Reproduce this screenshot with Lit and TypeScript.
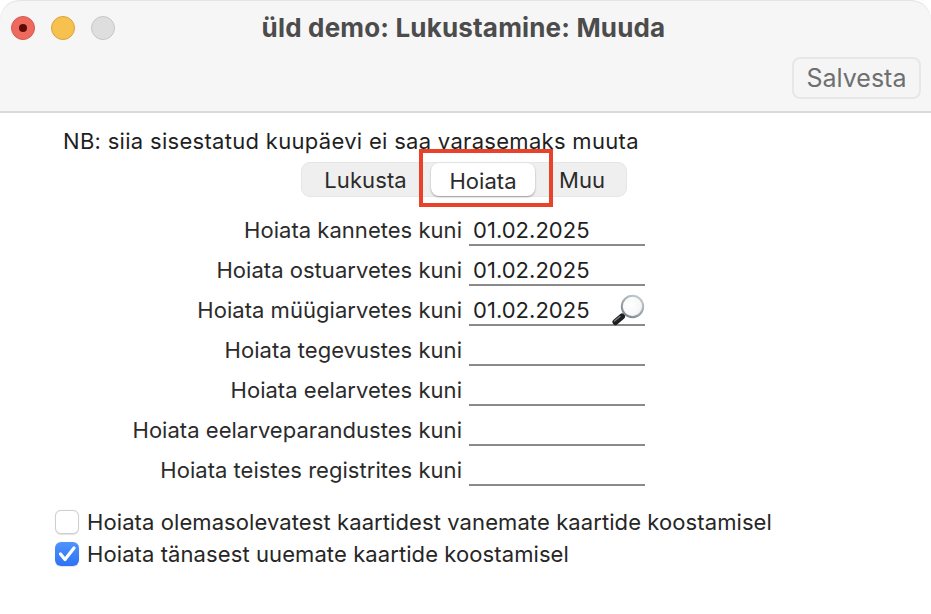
import { LitElement, html, css } from "lit";
import { customElement } from "lit/decorators.js";

const ROWS = [
    { label: "Hoiata kannetes kuni", value: "01.02.2025" },
    { label: "Hoiata ostuarvetes kuni", value: "01.02.2025" },
    { label: "Hoiata müügiarvetes kuni", value: "01.02.2025", lookup: true },
    { label: "Hoiata tegevustes kuni", value: "" },
    { label: "Hoiata eelarvetes kuni", value: "" },
    { label: "Hoiata eelarveparandustes kuni", value: "" },
    { label: "Hoiata teistes registrites kuni", value: "" },
];

@customElement("app-root")
export class AppRoot extends LitElement {
    static styles = css`
        :host {
            display: block;
            position: relative;
            width: 931px;
            height: 614px;
            overflow: hidden;
            background: #fff;
            font-family: Inter, "Liberation Sans", sans-serif;
            font-size: 22px;
            letter-spacing: 0.03px;
            color: #262626;
        }
        .toolbar {
            box-sizing: border-box;
            height: 113px;
            display: flex;
            flex-direction: column;
            padding: 0 10px 0 11px;
            background: #f6f6f6;
            border-bottom: 2px solid #dadada;
            border-radius: 20px 20px 0 0;
            box-shadow: inset 0 1px 0 #e4e4e4;
        }
        .titlebar {
            height: 56px;
            flex: none;
            display: flex;
            align-items: center;
            position: relative;
        }
        .lights {
            display: flex;
            gap: 16px;
        }
        .light {
            box-sizing: border-box;
            width: 24px;
            height: 24px;
            border-radius: 50%;
            display: flex;
            align-items: center;
            justify-content: center;
        }
        .close { background: #ee6a5f; border: 1px solid #d35a50; }
        .close span {
            width: 8px;
            height: 8px;
            border-radius: 50%;
            background: #5e0b06;
        }
        .min { background: #f6c14f; border: 1px solid #dca13c; }
        .max { background: #dedede; border: 1px solid #c6c6c6; }
        .title {
            position: absolute;
            left: -5px;
            right: 0;
            top: 13px;
            text-align: center;
            font-size: 26px;
            line-height: 30px;
            font-weight: 700;
            letter-spacing: 0.17px;
            color: #4c4c4c;
        }
        .actions {
            display: flex;
            justify-content: flex-end;
            margin-top: 1px;
        }
        .save {
            box-sizing: border-box;
            width: 129px;
            height: 42px;
            border: 2px solid #e7e7e7;
            border-radius: 8px;
            background: #f5f5f5;
            color: #6f6f6f;
            font: inherit;
            font-size: 25px;
            padding: 0;
        }
        .note {
            margin: 15px 0 0 63px;
            line-height: 26px;
            letter-spacing: 0.3px;
            color: #1f1f1f;
        }
        .tabs-wrap {
            display: flex;
            padding-left: 301px;
            margin-top: 8px;
        }
        .tabs {
            box-sizing: border-box;
            width: 326px;
            height: 35px;
            display: flex;
            align-items: center;
            background: #efefef;
            border: 1px solid #e6e6e6;
            border-radius: 9px;
        }
        .tab {
            flex: none;
            text-align: center;
            line-height: 36px;
            color: #2b2b2b;
        }
        .tab.first { width: 127px; padding-right: 2px; letter-spacing: 0.1px; }
        .tab.active {
            width: 104px;
            height: 33px;
            background: #fff;
            border-radius: 8px;
            box-shadow: 0 1px 2px rgba(0, 0, 0, 0.35);
        }
        .tab.last { width: 88px; padding-left: 3px; }
        .marker {
            position: absolute;
            left: 419px;
            top: 149px;
            box-sizing: border-box;
            width: 134px;
            height: 58px;
            border: 4px solid #e8432a;
        }
        .form {
            margin-top: 15px;
            display: grid;
            grid-template-columns: 462px 176px;
            column-gap: 7px;
            grid-auto-rows: 40px;
        }
        .label {
            text-align: right;
            line-height: 36px;
            color: #2b2b2b;
        }
        .field {
            box-sizing: border-box;
            height: 30px;
            margin-top: 4px;
            padding-left: 4px;
            line-height: 28px;
            border-bottom: 2px solid #8a8a8a;
            color: #1f1f1f;
            position: relative;
        }
        .lookup {
            position: absolute;
            right: 0;
            top: -4px;
            width: 36px;
            height: 36px;
        }
        .checks {
            margin: 18px 0 0 55px;
            display: flex;
            flex-direction: column;
            gap: 8px;
            letter-spacing: 0.09px;
        }
        .check {
            display: flex;
            align-items: center;
            gap: 8px;
            height: 24px;
            color: #262626;
        }
        .box {
            box-sizing: border-box;
            width: 24px;
            height: 24px;
            border-radius: 6px;
            border: 1px solid #cfcfcf;
            background: #fff;
            box-shadow: 0 0.5px 1px rgba(0, 0, 0, 0.12);
        }
        .box.on {
            border: none;
            background: linear-gradient(#4f94fb, #2f72f6);
        }
        .box svg {
            display: block;
            width: 24px;
            height: 24px;
        }
    `;

    renderLookup() {
        return html`
            <svg class="lookup" viewBox="0 0 36 36">
                <defs>
                    <radialGradient id="lens" cx="42%" cy="42%" r="65%">
                        <stop offset="0%" stop-color="#ffffff"></stop>
                        <stop offset="72%" stop-color="#f6f7f8"></stop>
                        <stop offset="100%" stop-color="#cfd5da"></stop>
                    </radialGradient>
                    <linearGradient id="ring" x1="0.8" y1="0" x2="0.2" y2="1">
                        <stop offset="0%" stop-color="#c3ccd3"></stop>
                        <stop offset="100%" stop-color="#7d858b"></stop>
                    </linearGradient>
                </defs>
                <path d="M14 24 L17 21" stroke="#8a8d90" stroke-width="3"></path>
                <path d="M6.5 30 L13 24.5" stroke="#1d1d1f" stroke-width="6" stroke-linecap="round"></path>
                <path d="M5.5 29 L11 24.5" stroke="#7d8082" stroke-width="1.3" stroke-linecap="round"></path>
                <circle cx="23.5" cy="14.5" r="10.7" fill="url(#lens)" stroke="url(#ring)" stroke-width="2"></circle>
            </svg>
        `;
    }

    render() {
        return html`
            <div class="toolbar">
                <div class="titlebar">
                    <div class="lights">
                        <div class="light close"><span></span></div>
                        <div class="light min"></div>
                        <div class="light max"></div>
                    </div>
                    <div class="title">üld demo: Lukustamine: Muuda</div>
                </div>
                <div class="actions"><button class="save">Salvesta</button></div>
            </div>
            <div class="note">NB: siia sisestatud kuupäevi ei saa varasemaks muuta</div>
            <div class="tabs-wrap">
                <div class="tabs">
                    <div class="tab first">Lukusta</div>
                    <div class="tab active">Hoiata</div>
                    <div class="tab last">Muu</div>
                </div>
            </div>
            <div class="marker"></div>
            <div class="form">
                ${ROWS.map(
                    (r) => html`
                        <div class="label">${r.label}</div>
                        <div class="field">${r.value}${r.lookup ? this.renderLookup() : ""}</div>
                    `
                )}
            </div>
            <div class="checks">
                <div class="check">
                    <div class="box"></div>
                    <span>Hoiata olemasolevatest kaartidest vanemate kaartide koostamisel</span>
                </div>
                <div class="check">
                    <div class="box on">
                        <svg viewBox="0 0 24 24">
                            <path d="M5.5 12 L10 17.5 L19 6" fill="none" stroke="#fff" stroke-width="3.2" stroke-linecap="round" stroke-linejoin="round"></path>
                        </svg>
                    </div>
                    <span>Hoiata tänasest uuemate kaartide koostamisel</span>
                </div>
            </div>
        `;
    }
}
